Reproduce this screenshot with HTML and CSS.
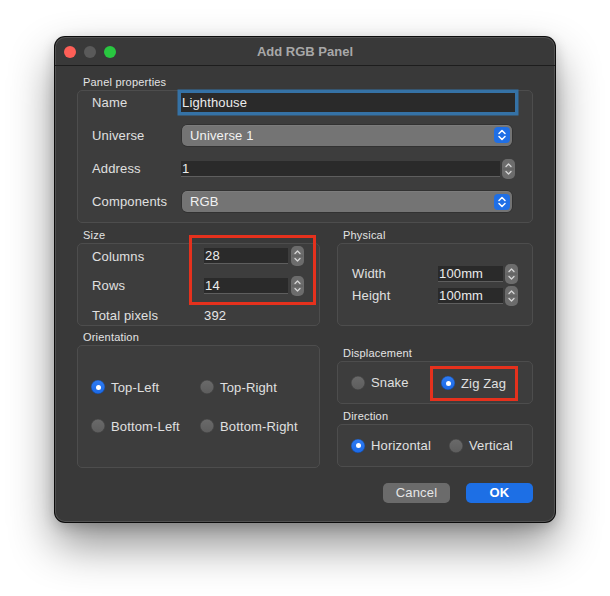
FILE: index.html
```html
<!DOCTYPE html>
<html>
<head>
<meta charset="utf-8">
<link rel="stylesheet" href="styles.css">
</head>
<body>
<div class="desk">
  <div class="window">
    <div class="titlebar">
      <div class="lights"><span class="light red"></span><span class="light gray"></span><span class="light green"></span></div>
      <div class="title">Add RGB Panel</div>
      <div></div>
    </div>
    <div class="content">
      <section class="group">
        <div class="glabel">Panel properties</div>
        <div class="gbox props">
          <div class="lbl">Name</div>
          <div class="ctl"><div class="field name">Lighthouse</div></div>
          <div class="lbl">Universe</div>
          <div class="ctl"><div class="combo"><span>Universe 1</span><svg class="stepper" width="16" height="16" viewBox="0 0 16 16"><rect width="16" height="16" rx="4" fill="#1f6fe6"/><path d="M5 6.5 L8 3.5 L11 6.5 M5 9.5 L8 12.5 L11 9.5" stroke="#fff" stroke-width="1.5" fill="none" stroke-linecap="round" stroke-linejoin="round"/></svg></div></div>
          <div class="lbl">Address</div>
          <div class="ctl num"><div class="field addr">1</div><svg class="spin" width="13" height="20" viewBox="0 0 13 20"><rect width="13" height="20" rx="5" fill="#6c6c6c"/><line x1="1" y1="10" x2="12" y2="10" stroke="#5e5e5e" stroke-width="1"/><path d="M4 7.5 L6.5 5 L9 7.5 M4 12.5 L6.5 15 L9 12.5" stroke="#d6d6d6" stroke-width="1.3" fill="none" stroke-linecap="round" stroke-linejoin="round"/></svg></div>
          <div class="lbl">Components</div>
          <div class="ctl"><div class="combo"><span>RGB</span><svg class="stepper" width="16" height="16" viewBox="0 0 16 16"><rect width="16" height="16" rx="4" fill="#1f6fe6"/><path d="M5 6.5 L8 3.5 L11 6.5 M5 9.5 L8 12.5 L11 9.5" stroke="#fff" stroke-width="1.5" fill="none" stroke-linecap="round" stroke-linejoin="round"/></svg></div></div>
        </div>
      </section>

      <div class="cols">
        <div class="col left">
          <section class="group size">
            <div class="glabel">Size</div>
            <div class="gbox size-box">
              <div class="lbl">Columns</div>
              <div class="ctl num"><div class="field sz">28</div><svg class="spin" width="13" height="20" viewBox="0 0 13 20"><rect width="13" height="20" rx="5" fill="#6c6c6c"/><line x1="1" y1="10" x2="12" y2="10" stroke="#5e5e5e" stroke-width="1"/><path d="M4 7.5 L6.5 5 L9 7.5 M4 12.5 L6.5 15 L9 12.5" stroke="#d6d6d6" stroke-width="1.3" fill="none" stroke-linecap="round" stroke-linejoin="round"/></svg></div>
              <div class="lbl">Rows</div>
              <div class="ctl num"><div class="field sz">14</div><svg class="spin" width="13" height="20" viewBox="0 0 13 20"><rect width="13" height="20" rx="5" fill="#6c6c6c"/><line x1="1" y1="10" x2="12" y2="10" stroke="#5e5e5e" stroke-width="1"/><path d="M4 7.5 L6.5 5 L9 7.5 M4 12.5 L6.5 15 L9 12.5" stroke="#d6d6d6" stroke-width="1.3" fill="none" stroke-linecap="round" stroke-linejoin="round"/></svg></div>
              <div class="lbl">Total pixels</div>
              <div class="ctl value">392</div>
            </div>
            <div class="mark size-mark"></div>
          </section>

          <section class="group">
            <div class="glabel">Orientation</div>
            <div class="gbox orient-box">
              <label class="opt"><span class="radio on"></span>Top-Left</label>
              <label class="opt"><span class="radio"></span>Top-Right</label>
              <label class="opt"><span class="radio"></span>Bottom-Left</label>
              <label class="opt"><span class="radio"></span>Bottom-Right</label>
            </div>
          </section>
        </div>

        <div class="col right">
          <section class="group">
            <div class="glabel">Physical</div>
            <div class="gbox phys-box">
              <div class="phys-grid">
                <div class="lbl">Width</div>
                <div class="ctl num"><div class="field ph">100mm</div><svg class="spin" width="13" height="20" viewBox="0 0 13 20"><rect width="13" height="20" rx="5" fill="#6c6c6c"/><line x1="1" y1="10" x2="12" y2="10" stroke="#5e5e5e" stroke-width="1"/><path d="M4 7.5 L6.5 5 L9 7.5 M4 12.5 L6.5 15 L9 12.5" stroke="#d6d6d6" stroke-width="1.3" fill="none" stroke-linecap="round" stroke-linejoin="round"/></svg></div>
                <div class="lbl">Height</div>
                <div class="ctl num"><div class="field ph">100mm</div><svg class="spin" width="13" height="20" viewBox="0 0 13 20"><rect width="13" height="20" rx="5" fill="#6c6c6c"/><line x1="1" y1="10" x2="12" y2="10" stroke="#5e5e5e" stroke-width="1"/><path d="M4 7.5 L6.5 5 L9 7.5 M4 12.5 L6.5 15 L9 12.5" stroke="#d6d6d6" stroke-width="1.3" fill="none" stroke-linecap="round" stroke-linejoin="round"/></svg></div>
              </div>
            </div>
          </section>

          <section class="group disp">
            <div class="glabel">Displacement</div>
            <div class="gbox disp-box">
              <label class="opt"><span class="radio"></span>Snake</label>
              <div class="mark zig"><label class="opt"><span class="radio on"></span>Zig Zag</label></div>
            </div>
          </section>

          <section class="group dir">
            <div class="glabel">Direction</div>
            <div class="gbox dir-box">
              <label class="opt"><span class="radio on"></span>Horizontal</label>
              <label class="opt"><span class="radio"></span>Vertical</label>
            </div>
          </section>

          <div class="buttons">
            <button class="btn cancel">Cancel</button>
            <button class="btn ok">OK</button>
          </div>
        </div>
      </div>
    </div>
  </div>
</div>
</body>
</html>
```

FILE: styles.css
```css
html, body {
  margin: 0;
  padding: 0;
  background: #ffffff;
  font-family: "Liberation Sans", Arial, sans-serif;
}

.desk {
  box-sizing: border-box;
  height: 596px;
  padding: 37px 0 0 55px;
}

.window {
  width: 500px;
  height: 485px;
  background: #393939;
  border-radius: 10px;
  box-shadow: inset 0 0 0 1px rgba(255, 255, 255, 0.13), 0 0 0 1px #0c0c0c, 0 22px 45px rgba(0, 0, 0, 0.45), 0 4px 14px rgba(0, 0, 0, 0.2);
  color: #e2e2e2;
  font-size: 13px;
  letter-spacing: 0.15px;
}

.titlebar {
  height: 28px;
  border-bottom: 1px solid #1d1d1d;
  display: grid;
  grid-template-columns: 1fr auto 1fr;
  align-items: center;
}

.lights {
  display: flex;
  gap: 8px;
  padding-left: 9px;
  padding-top: 1px;
}

.light {
  width: 12px;
  height: 12px;
  border-radius: 50%;
}
.light.red { background: #fe5f57; }
.light.gray { background: #5a5a5a; }
.light.green { background: #29c740; }

.title {
  font-weight: bold;
  font-size: 13px;
  color: #a8a8a8;
  padding-top: 1px;
  letter-spacing: 0;
}

.content {
  padding: 9px 22px 0;
}

.glabel {
  font-size: 11px;
  line-height: 14px;
  color: #e4e4e4;
  padding-left: 6px;
  letter-spacing: 0.2px;
}

.gbox {
  margin-top: 1px;
  box-sizing: border-box;
  background: #3d3d3d;
  border: 1px solid #4d4d4d;
  border-radius: 5px;
}

.lbl {
  color: #e0e0e0;
}

.field {
  box-sizing: border-box;
  background: #2a2a2a;
  color: #ececec;
  height: 16px;
  line-height: 15px;
  padding-left: 1px;
  border-bottom: 1px solid #5e5e5e;
}

.props {
  height: 133px;
  display: grid;
  grid-template-columns: 89px 1fr;
  grid-template-rows: repeat(4, 22px);
  row-gap: 11.3px;
  padding: 0 0 0 14px;
  align-items: center;
}

.field.name {
  width: 334px;
  height: 19px;
  line-height: 19px;
  border-bottom: none;
  box-shadow: 0 0 0 3.5px #3572a6;
}

.combo {
  box-sizing: border-box;
  margin-left: 1px;
  width: 330px;
  height: 21px;
  background: #747474;
  border-radius: 5px;
  display: flex;
  align-items: center;
  justify-content: space-between;
  padding: 0 2px 0 8px;
  color: #f2f2f2;
  box-shadow: 0 0 0 0.5px rgba(0, 0, 0, 0.35), inset 0 1px 0 rgba(255, 255, 255, 0.06);
}

.stepper, .spin {
  display: block;
  flex: none;
}

.num {
  display: flex;
  align-items: center;
  gap: 2px;
}

.field.addr {
  width: 319px;
}

.cols {
  display: flex;
  gap: 17px;
  margin-top: 5px;
}

.left { width: 243px; }
.right { width: 196px; }

.size {
  position: relative;
}

.size-box {
  height: 83px;
  padding: 2px 0 0 14px;
  display: grid;
  grid-template-columns: 112px auto;
  grid-auto-rows: 20px;
  row-gap: 9.5px;
  align-items: center;
}

.size-box .num { gap: 3px; }

.field.sz { width: 84px; }

.value {
  color: #e6e6e6;
}

.mark {
  box-sizing: border-box;
  border: 3px solid #e5311d;
}

.size-mark {
  position: absolute;
  left: 112px;
  top: 7px;
  width: 127px;
  height: 70px;
}

.group + .group {
  margin-top: 4px;
}

.orient-box {
  height: 123px;
  padding-left: 13px;
  display: grid;
  grid-template-columns: 109px auto;
  grid-auto-rows: 18px;
  row-gap: 21px;
  align-content: center;
}

.opt {
  display: flex;
  align-items: center;
  gap: 6px;
  color: #e0e0e0;
  white-space: nowrap;
}

.radio {
  width: 14px;
  height: 14px;
  border-radius: 50%;
  flex: none;
  background: linear-gradient(#6a6a6a, #5d5d5d);
  box-shadow: inset 0 0 0 0.5px rgba(0, 0, 0, 0.3);
  display: grid;
  place-items: center;
}

.radio.on {
  background: linear-gradient(#2f7cf3, #1b69e6);
}

.radio.on::after {
  content: "";
  width: 5px;
  height: 5px;
  border-radius: 50%;
  background: #ffffff;
}

.phys-box {
  height: 83px;
  padding-left: 14px;
  display: flex;
  flex-direction: column;
  justify-content: center;
}

.phys-grid {
  display: grid;
  grid-template-columns: 86px auto;
  grid-auto-rows: 20px;
  row-gap: 2px;
  align-items: center;
}

.field.ph { width: 65px; }

.right .group.disp { margin-top: 20px; }
.right .group.dir { margin-top: 5px; }

.disp-box {
  height: 43px;
  padding-left: 13px;
  display: grid;
  grid-template-columns: 79px auto;
  align-items: center;
}

.zig {
  width: 88px;
  height: 35px;
  padding-left: 8px;
  display: flex;
  align-items: center;
  margin-top: 1px;
}

.dir-box {
  height: 43px;
  padding-left: 13px;
  display: grid;
  grid-template-columns: 98px auto;
  align-items: center;
}

.buttons {
  margin-top: 16px;
  display: flex;
  justify-content: flex-end;
  gap: 16px;
}

.btn {
  width: 67px;
  height: 20px;
  border: none;
  border-radius: 5px;
  font-family: inherit;
  font-size: 13px;
  padding: 0;
  line-height: 20px;
  letter-spacing: 0.15px;
}

.btn.cancel {
  background: #6b6b6b;
  color: #e6e6e6;
}

.btn.ok {
  background: #1d6fe5;
  color: #ffffff;
  font-weight: bold;
}
```
